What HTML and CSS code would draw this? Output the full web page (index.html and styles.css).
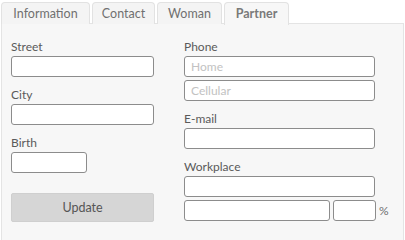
FILE: index.html
```html
<!DOCTYPE html>
<html lang="en">
<head>
    <meta charset="UTF-8">
    <title>Partner</title>
    <link rel="stylesheet" href="styles.css">
</head>
<body>
    <div class="tabs">
        <div class="tab tab-info">Information</div>
        <div class="tab tab-contact">Contact</div>
        <div class="tab tab-woman">Woman</div>
        <div class="tab tab-partner active">Partner</div>
    </div>
    <div class="panel">
        <div class="col left">
            <label>Street</label>
            <input type="text" class="field">
            <label>City</label>
            <input type="text" class="field">
            <label>Birth</label>
            <input type="text" class="field short">
            <button class="update-btn">Update</button>
        </div>
        <div class="col right">
            <label>Phone</label>
            <input type="text" class="field" placeholder="Home">
            <input type="text" class="field stacked" placeholder="Cellular">
            <label>E-mail</label>
            <input type="text" class="field">
            <label>Workplace</label>
            <input type="text" class="field">
            <div class="row stacked">
                <input type="text" class="field grow">
                <input type="text" class="field pct">
                <span class="suffix">%</span>
            </div>
        </div>
    </div>
</body>
</html>
```

FILE: styles.css
```css
* {
    margin: 0;
    padding: 0;
    box-sizing: border-box;
    font-family: 'Lato', 'Open Sans', sans-serif;
}

body {
    background: #ffffff;
    font-size: 12px;
    color: #555;
}

.tabs {
    display: flex;
    gap: 2px;
    padding: 2px 0 0 1px;
    height: 23px;
}

.tab {
    height: 22px;
    line-height: 21px;
    text-align: center;
    border: 1px solid #e2e2e2;
    border-bottom: none;
    border-radius: 4px 4px 0 0;
    background: #f4f4f4;
    color: #707070;
    font-size: 12.5px;
}

.tab-info { width: 89px; }
.tab-contact { width: 63px; }
.tab-woman { width: 65px; }
.tab-partner { width: 65px; }

.tab.active {
    background: #f7f7f7;
    font-weight: 700;
    color: #7a7a7a;
    height: 23px;
    position: relative;
    z-index: 1;
}

.panel {
    display: flex;
    gap: 30px;
    margin-left: 1px;
    margin-right: 1px;
    height: 217px;
    padding: 15px 0 0 9px;
    background: #f7f7f7;
    border: 1px solid #e4e4e4;
    border-bottom: none;
}

.col {
    display: flex;
    flex-direction: column;
    align-items: flex-start;
}

.col.left {
    width: 143px;
}

.col.right {
    width: 210px;
}

label {
    display: block;
    height: 16px;
    line-height: 16px;
    margin-bottom: 1px;
    color: #5a5a5a;
}

.field {
    width: 143px;
    height: 21px;
    border: 1px solid #8c8c8c;
    border-radius: 3px;
    background: #fff;
    padding: 0 6px;
    font-size: 12px;
    color: #555;
    margin-bottom: 10px;
    outline: none;
}

.field::placeholder {
    color: #c2c2c2;
}

.right .field {
    width: 191px;
}

.right .field.stacked,
.row.stacked {
    margin-top: -7px;
}

.field.short {
    width: 76px;
}

.update-btn {
    margin-top: 10px;
    width: 143px;
    height: 29px;
    border: 1px solid #cfcfcf;
    border-radius: 2px;
    background: #d6d6d6;
    color: #555;
    font-size: 12.5px;
}

.row {
    display: flex;
    align-items: center;
    gap: 3px;
}

.right .row .field.grow {
    width: 146px;
}

.right .row .field.pct {
    width: 43px;
}

.row .field {
    margin-bottom: 0;
}

.suffix {
    margin-left: 0;
    color: #707070;
}
```
